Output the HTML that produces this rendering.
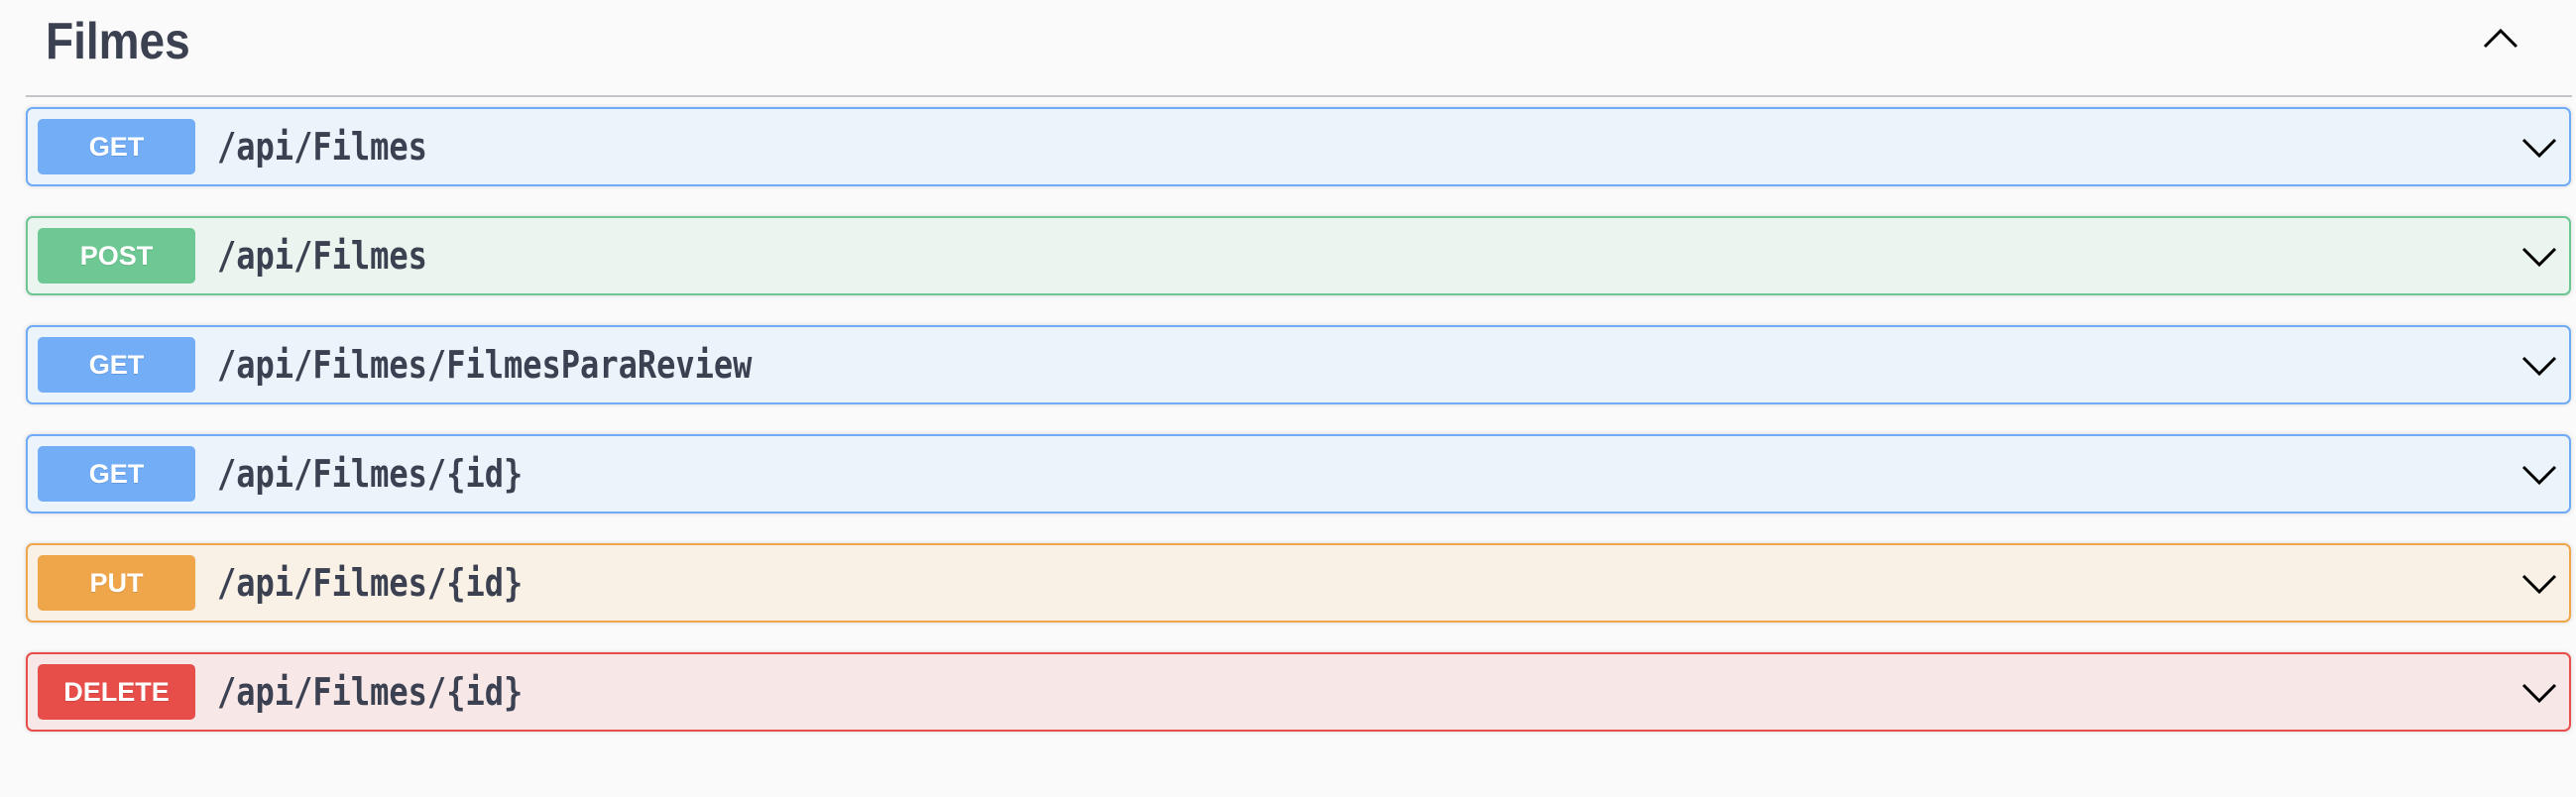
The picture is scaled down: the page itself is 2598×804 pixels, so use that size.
<!DOCTYPE html>
<html><head><style>
body{margin:0;background:#fafafa;width:2598px;height:804px;overflow:hidden;font-family:"Liberation Sans",sans-serif;}
h2{position:absolute;left:46px;top:6px;margin:0;font-size:46px;font-weight:bold;color:#3b4151;line-height:70px;transform:scaleY(1.12);transform-origin:0 50%;}
.sep{position:absolute;left:26px;top:96px;width:2568px;height:2px;background:#c4c5c9;}
.up{position:absolute;left:2503px;top:28px;}
.row{position:absolute;left:26px;width:2563px;height:76px;border:2px solid;border-radius:7px;box-shadow:0 0 4px rgba(0,0,0,.15);}
.b{position:absolute;left:10px;top:10px;width:159px;height:56px;border-radius:5px;color:#fff;font-weight:bold;font-size:27px;line-height:56px;text-align:center;text-shadow:0 1px 0 rgba(0,0,0,.12);}
.p{position:absolute;left:191px;top:0;line-height:76px;font-family:"DejaVu Sans Mono","Liberation Mono",monospace;font-weight:bold;font-size:32px;color:#3b4151;transform:scaleY(1.2);transform-origin:0 50%;}
.ch{position:absolute;right:11px;top:28px;}
.get{border-color:#6fabf7;background:#ebf3fb}.get .b{background:#72adf6}
.post{border-color:#6cc793;background:#ebf5ef}.post .b{background:#6ec893}
.put{border-color:#efa64a;background:#f9f0e6}.put .b{background:#efa64a}
.del{border-color:#e74e4a;background:#f8e7e7}.del .b{background:#e74e4a}
</style></head><body>
<h2>Filmes</h2>
<svg class="up" width="38" height="22" viewBox="0 0 38 22"><path d="M3 19 L19 3 L35 19" fill="none" stroke="#000" stroke-width="3"/></svg>
<div class="sep"></div>
<div class="row get" style="top:108px"><div class="b">GET</div><div class="p">/api/Filmes</div><svg class="ch" width="38" height="22"><path d="M3 3 L19 19 L35 3" fill="none" stroke="#000" stroke-width="3"/></svg></div>
<div class="row post" style="top:218px"><div class="b">POST</div><div class="p">/api/Filmes</div><svg class="ch" width="38" height="22"><path d="M3 3 L19 19 L35 3" fill="none" stroke="#000" stroke-width="3"/></svg></div>
<div class="row get" style="top:328px"><div class="b">GET</div><div class="p">/api/Filmes/FilmesParaReview</div><svg class="ch" width="38" height="22"><path d="M3 3 L19 19 L35 3" fill="none" stroke="#000" stroke-width="3"/></svg></div>
<div class="row get" style="top:438px"><div class="b">GET</div><div class="p">/api/Filmes/{id}</div><svg class="ch" width="38" height="22"><path d="M3 3 L19 19 L35 3" fill="none" stroke="#000" stroke-width="3"/></svg></div>
<div class="row put" style="top:548px"><div class="b">PUT</div><div class="p">/api/Filmes/{id}</div><svg class="ch" width="38" height="22"><path d="M3 3 L19 19 L35 3" fill="none" stroke="#000" stroke-width="3"/></svg></div>
<div class="row del" style="top:658px"><div class="b">DELETE</div><div class="p">/api/Filmes/{id}</div><svg class="ch" width="38" height="22"><path d="M3 3 L19 19 L35 3" fill="none" stroke="#000" stroke-width="3"/></svg></div>
</body></html>
